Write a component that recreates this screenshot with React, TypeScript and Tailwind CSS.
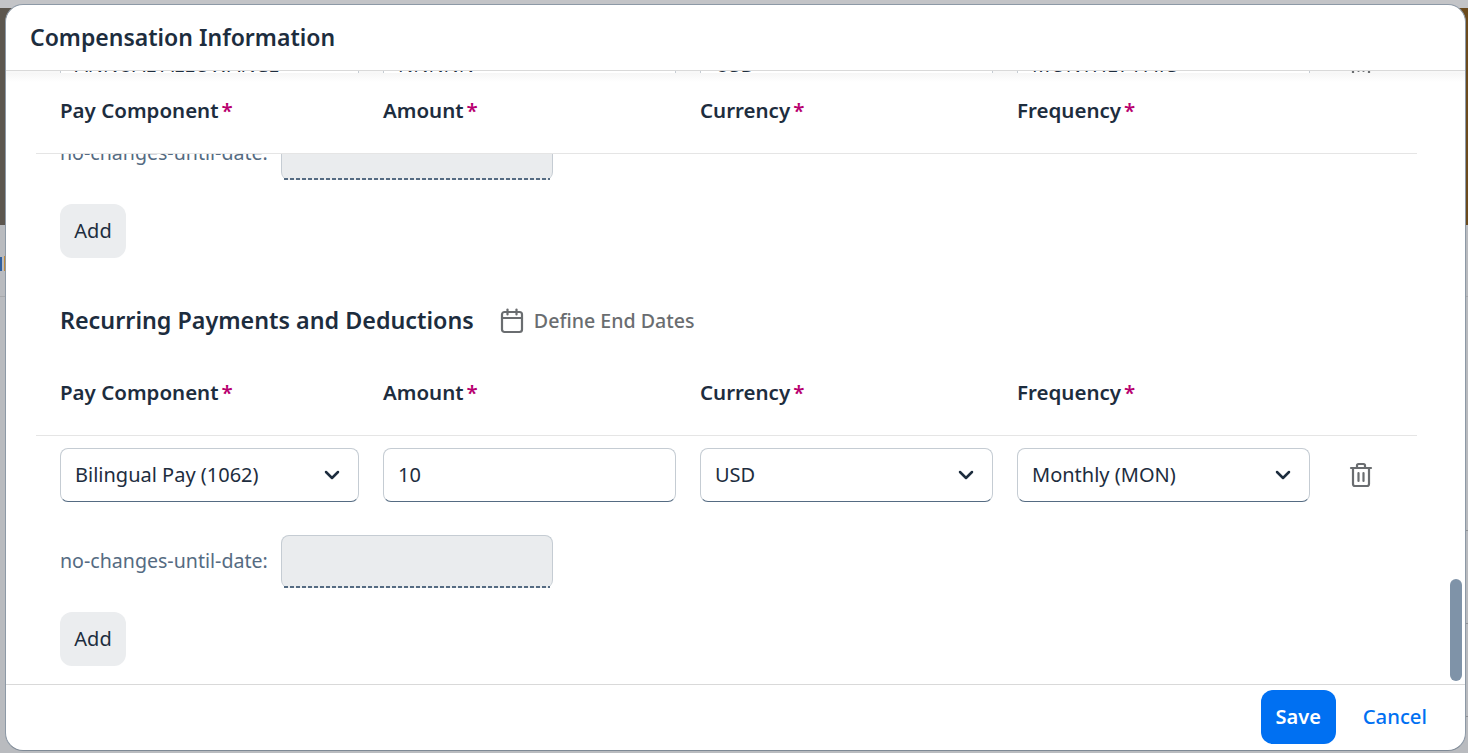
import { ChevronDown } from "lucide-react";

// Field label with the required star
function ColumnLabel({ text }: { text: string }) {
  return (
    <div className="text-[20.5px] leading-[28px] font-semibold text-[#1d2d3e]">
      {text}
      <span className="ml-[3px] text-[#b8006f]">*</span>
    </div>
  );
}

function HeaderRow() {
  return (
    <div className="ml-[30px] w-[1381px] h-[81px] border-b border-[#e5e5e5] pl-6 pt-[23px] grid grid-cols-[323px_317px_317px_1fr] bg-white">
      <ColumnLabel text="Pay Component" />
      <ColumnLabel text="Amount" />
      <ColumnLabel text="Currency" />
      <ColumnLabel text="Frequency" />
    </div>
  );
}

function SelectBox({ value, width }: { value: string; width: string }) {
  return (
    <div className={`${width} h-[54px] flex items-center justify-between pl-[14px] pr-[14px] rounded-lg bg-white border border-[#c5ccd3] border-b-[#556b82] text-[20px] text-[#1d2d3e]`}>
      <span className="whitespace-nowrap">{value}</span>
      <ChevronDown size={24} strokeWidth={2.5} className="text-[#1d2d3e]" />
    </div>
  );
}

function InputBox({ value }: { value: string }) {
  return (
    <div className="w-[293px] h-[54px] flex items-center pl-[14px] rounded-lg bg-white border border-[#c5ccd3] border-b-[#556b82] text-[20px] text-[#1d2d3e]">
      {value}
    </div>
  );
}

function TrashIcon() {
  return (
    <svg width="24" height="26" viewBox="0 0 24 26" fill="none" stroke="#6a6d70" strokeWidth="2.2" strokeLinecap="round" strokeLinejoin="round">
      <path d="M2 6h20" />
      <path d="M8 6V3.5A1.5 1.5 0 0 1 9.5 2h5A1.5 1.5 0 0 1 16 3.5V6" />
      <path d="M4 6v16a2 2 0 0 0 2 2h12a2 2 0 0 0 2-2V6" />
      <path d="M9.5 11v8" />
      <path d="M14.5 11v8" />
    </svg>
  );
}

function CalendarIcon() {
  return (
    <svg width="24" height="26" viewBox="0 0 24 26" fill="none" stroke="#6a6d70" strokeWidth="2.2" strokeLinecap="round" strokeLinejoin="round">
      <rect x="2" y="4" width="20" height="20" rx="2.5" />
      <path d="M2 10h20" />
      <path d="M7.5 1.5v5" />
      <path d="M16.5 1.5v5" />
    </svg>
  );
}

function PayRow({ pay, amount, currency, frequency }: { pay: string; amount: string; currency: string; frequency: string }) {
  return (
    <div className="ml-[54px] grid grid-cols-[323px_317px_317px_1fr]">
      <SelectBox value={pay} width="w-[299px]" />
      <InputBox value={amount} />
      <SelectBox value={currency} width="w-[293px]" />
      <div className="flex items-center">
        <SelectBox value={frequency} width="w-[293px]" />
        <div className="ml-[39px]">
          <TrashIcon />
        </div>
      </div>
    </div>
  );
}

function NoChangesField() {
  return (
    <div className="ml-[54px] flex items-center">
      <span className="w-[221px] -mt-[2px] text-[19.6px] text-[#556b82]">no-changes-until-date:</span>
      <div className="w-[272px] h-[53px] rounded-lg bg-[#eaecee] border border-[#c5ccd3] border-b-0 relative">
        <div className="absolute left-[2px] right-[2px] bottom-0 h-[2px] bg-[repeating-linear-gradient(90deg,#556b82_0,#556b82_4px,transparent_4px,transparent_6px)]" />
      </div>
    </div>
  );
}

function AddButton() {
  return (
    <button className="ml-[54px] block w-[66px] h-[54px] rounded-xl bg-[#ebedef] text-[20px] text-[#1d2d3e]">
      Add
    </button>
  );
}

export default function App() {
  return (
    <div
      className="relative h-screen w-full overflow-hidden bg-[#b9bbbf] pt-[4px] pl-[5px]"
      style={{ fontFamily: '"Noto Sans", "Open Sans", sans-serif' }}
    >
      {/* Page behind the dialog */}
      <div className="absolute left-0 right-0 top-0 h-[8px] bg-[#c3c4c7]" />
      <div className="absolute left-0 right-0 top-[8px] h-[217px] bg-gradient-to-r from-[#5c564e] to-[#6b4a1c]" />
      <div className="absolute left-0 top-[257px] h-[14px] w-[2px] bg-[#2f5f9e]" />
      <div className="absolute left-[4px] top-[256px] h-[15px] w-[1px] bg-[#c08a3a]" />
      <div className="absolute left-0 right-0 top-[296px] h-px bg-[#a8a9ac]" />
      <div className="absolute right-0 top-[530px] h-px w-[4px] bg-[#8f9195]" />
      <div className="absolute right-0 top-[623px] h-px w-[4px] bg-[#8f9195]" />
      <div className="absolute right-0 top-[716px] h-px w-[4px] bg-[#8f9195]" />

      {/* Dialog */}
      <div className="relative w-[1461px] h-[747px] flex flex-col overflow-hidden rounded-[18px] bg-white border border-[#8d99a6] border-b-[#7f8a96]">
        <div className="h-[66px] shrink-0 border-b border-[#d9d9d9] pl-[24px] pt-[14px] text-[23px] leading-[36px] font-semibold text-[#1d2d3e]">
          Compensation Information
        </div>

        <div className="relative h-[613px] shrink-0 overflow-hidden">
          {/* Row scrolled under the sticky header, only its lowest pixels show */}
          <div className="h-[2px] overflow-hidden bg-[#f8f8f8]">
            <div className="-mt-[33px]">
              <PayRow pay="ANNUAL ALLOWANCE" amount="NNNNN" currency="USD" frequency="MONTHLY PAYS" />
            </div>
          </div>

          <div className="relative">
            <HeaderRow />
            <div className="absolute left-0 right-0 top-0 h-[9px] bg-gradient-to-b from-[#f6f6f6] to-white" />
          </div>

          <div className="h-[26px] overflow-hidden">
            <div className="-mt-[27px]">
              <NoChangesField />
            </div>
          </div>
          <div className="mt-[24px]">
            <AddButton />
          </div>

          <div className="mt-[42px] mb-[15px] ml-[54px] h-[40px] flex items-center">
            <span className="text-[23.3px] font-semibold text-[#1d2d3e]">Recurring Payments and Deductions</span>
            <div className="ml-[26px] mt-[2px] flex items-center gap-[10px] text-[19.6px] font-medium text-[#6a6d70]">
              <CalendarIcon />
              <span>Define End Dates</span>
            </div>
          </div>

          <HeaderRow />

          <div className="mt-[12px]">
            <PayRow pay="Bilingual Pay (1062)" amount="10" currency="USD" frequency="Monthly (MON)" />
          </div>
          <div className="mt-[33px]">
            <NoChangesField />
          </div>
          <div className="mt-[24px]">
            <AddButton />
          </div>

          {/* Scrollbar thumb */}
          <div className="absolute right-[3px] top-[508px] h-[102px] w-[12px] rounded-md bg-[#7f93a8]" />
        </div>

        <div className="flex-1 border-t border-[#d9d9d9] flex items-center justify-end pr-[38px] pb-[2px]">
          <button className="w-[75px] h-[54px] rounded-xl bg-[#0070f2] text-[20px] font-semibold text-white">
            Save
          </button>
          <span className="ml-[27px] text-[20.3px] font-medium text-[#0070f2]">Cancel</span>
        </div>
      </div>
    </div>
  );
}
